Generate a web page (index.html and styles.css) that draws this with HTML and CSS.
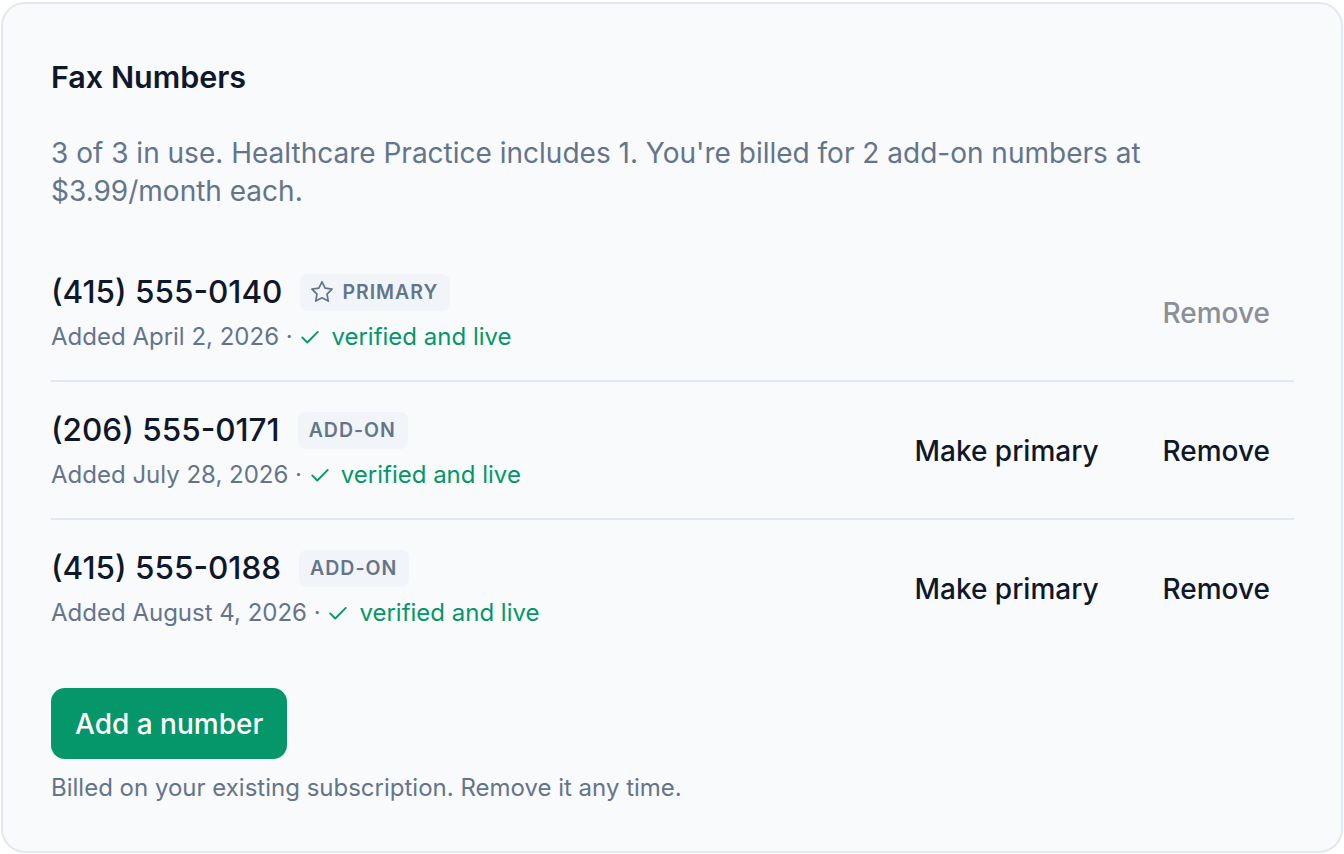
FILE: index.html
```html
<!DOCTYPE html>
<html>
<head>
<meta charset="utf-8">
<link rel="stylesheet" href="styles.css">
</head>
<body>
<section class="card">
  <h2 class="title">Fax Numbers</h2>
  <p class="desc">3 of 3 in use. Healthcare Practice includes 1. You're billed for 2 add-on numbers at $3.99/month each.</p>
  <ul class="list">
    <li class="row">
      <div class="info">
        <div class="line1">
          <span class="phone">(415) 555-0140</span>
          <span class="badge"><svg class="star" viewBox="2.5 2.5 19 19" width="22" height="22"><path d="M12 3.2l2.7 5.5 6 .9-4.35 4.25 1.03 6L12 17l-5.38 2.85 1.03-6L3.3 9.6l6-.9z" fill="none" stroke="currentColor" stroke-width="1.5" stroke-linejoin="round"/></svg>PRIMARY</span>
        </div>
        <div class="line2">Added April 2, 2026 · <span class="ok"><svg class="check" viewBox="0 0 24 24" width="22" height="22"><path d="M3.5 12.5l5.5 5.5L20.5 6.5" fill="none" stroke="currentColor" stroke-width="2" stroke-linecap="round" stroke-linejoin="round"/></svg>verified and live</span></div>
      </div>
      <div class="actions">
        <button class="action disabled">Remove</button>
      </div>
    </li>
    <li class="row">
      <div class="info">
        <div class="line1">
          <span class="phone">(206) 555-0171</span>
          <span class="badge">ADD-ON</span>
        </div>
        <div class="line2">Added July 28, 2026 · <span class="ok"><svg class="check" viewBox="0 0 24 24" width="22" height="22"><path d="M3.5 12.5l5.5 5.5L20.5 6.5" fill="none" stroke="currentColor" stroke-width="2" stroke-linecap="round" stroke-linejoin="round"/></svg>verified and live</span></div>
      </div>
      <div class="actions">
        <button class="action">Make primary</button>
        <button class="action">Remove</button>
      </div>
    </li>
    <li class="row">
      <div class="info">
        <div class="line1">
          <span class="phone">(415) 555-0188</span>
          <span class="badge">ADD-ON</span>
        </div>
        <div class="line2">Added August 4, 2026 · <span class="ok"><svg class="check" viewBox="0 0 24 24" width="22" height="22"><path d="M3.5 12.5l5.5 5.5L20.5 6.5" fill="none" stroke="currentColor" stroke-width="2" stroke-linecap="round" stroke-linejoin="round"/></svg>verified and live</span></div>
      </div>
      <div class="actions">
        <button class="action">Make primary</button>
        <button class="action">Remove</button>
      </div>
    </li>
  </ul>
  <button class="primary-btn">Add a number</button>
  <p class="foot">Billed on your existing subscription. Remove it any time.</p>
</section>
</body>
</html>
```
FILE: styles.css
```css
* { box-sizing: border-box; }
html, body { margin: 0; padding: 0; background: #ffffff; }
body {
  font-family: Inter, "Noto Sans", sans-serif;
  color: #0f172a;
  padding: 2px 1px 1px 1px;
}
.card {
  background: #f8fafc;
  border: 2px solid #e2e8f0;
  border-radius: 24px;
  height: 851px;
  padding: 53px 47px 40px 48px;
}
.title {
  margin: 0;
  font-size: 30.5px;
  font-weight: 600;
  line-height: 40px;
  color: #0f172a;
}
.desc {
  margin: 37px 0 0 0;
  font-size: 28px;
  line-height: 38px;
  color: #64748b;
  max-width: 1150px;
}
.list {
  list-style: none;
  margin: 34px 0 0 0;
  padding: 0;
}
.row {
  display: flex;
  align-items: center;
  justify-content: space-between;
  padding: 28px 0 27px 0;
  border-bottom: 2px solid #e2e8f0;
}
.row:last-child { border-bottom: none; }
.line1 {
  display: flex;
  align-items: center;
  gap: 18px;
}
.phone {
  font-size: 31.5px;
  font-weight: 500;
  line-height: 40px;
  color: #0f172a;
}
.badge {
  display: inline-flex;
  align-items: center;
  gap: 9px;
  background: #f1f5f9;
  color: #64748b;
  font-size: 19.5px;
  font-weight: 600;
  letter-spacing: 1px;
  height: 37px;
  padding: 0 12px 0 11px;
  border-radius: 8px;
}
.star { display: block; }
.line2 {
  margin-top: 9px;
  font-size: 24px;
  line-height: 32px;
  color: #64748b;
  display: flex;
  align-items: center;
  white-space: pre;
}
.ok {
  color: #059669;
  display: inline-flex;
  align-items: center;
  gap: 10px;
}
.check { display: block; }
.actions {
  display: flex;
  align-items: center;
  gap: 16px;
}
.action {
  background: none;
  border: none;
  font-family: inherit;
  font-size: 28px;
  font-weight: 500;
  color: #0f172a;
  padding: 10px 24px;
  cursor: pointer;
}
.action.disabled { color: #8b8f98; }
.primary-btn {
  display: block;
  margin-top: 32px;
  background: #059669;
  color: #ffffff;
  border: none;
  border-radius: 14px;
  font-family: inherit;
  font-size: 28px;
  font-weight: 500;
  height: 71px;
  padding: 0 24px;
}
.foot {
  margin: 13px 0 0 0;
  font-size: 24px;
  line-height: 32px;
  color: #64748b;
}
```
